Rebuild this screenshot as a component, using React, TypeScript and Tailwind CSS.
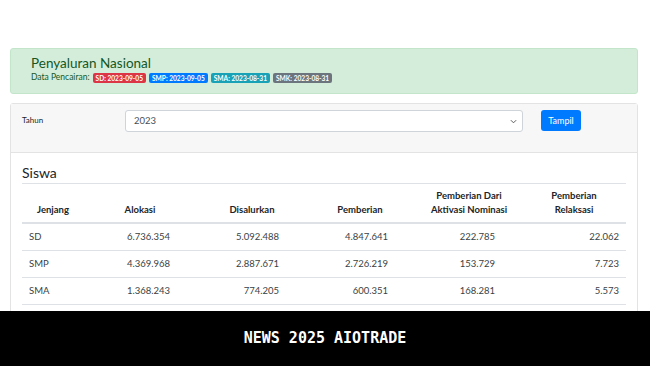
import React from "react";

const rows = [
  ["SD", "6.736.354", "5.092.488", "4.847.641", "222.785", "22.062"],
  ["SMP", "4.369.968", "2.887.671", "2.726.219", "153.729", "7.723"],
  ["SMA", "1.368.243", "774.205", "600.351", "168.281", "5.573"],
];

const cols = "grid-cols-[78px_78px_109px_109px_107px_123px]";

export default function App() {
  return (
    <div
      className="relative w-[650px] h-[366px] overflow-hidden bg-white"
      style={{ fontFamily: "Lato, 'Open Sans', sans-serif" }}
    >
      <div className="pt-[48px] pl-[10px]">
        {/* Alert */}
        <div className="w-[628px] h-[46px] rounded-[3px] bg-[#d4edda] border border-[#c3e6cb] pl-[20px] pt-[6px] text-[#155724]">
          <div className="text-[13.5px] leading-[17px]">Penyaluran Nasional</div>
          <div className="flex items-center gap-[3px] text-[8.5px] leading-[11px]">
            <span>Data Pencairan:</span>
            <span className="rounded-[2px] bg-[#dc3545] text-white font-bold text-[6.6px] leading-[10px] px-[3px]">SD: 2023-09-05</span>
            <span className="rounded-[2px] bg-[#007bff] text-white font-bold text-[6.6px] leading-[10px] px-[3px]">SMP: 2023-09-05</span>
            <span className="rounded-[2px] bg-[#17a2b8] text-white font-bold text-[6.6px] leading-[10px] px-[3px]">SMA: 2023-08-31</span>
            <span className="rounded-[2px] bg-[#6c757d] text-white font-bold text-[6.6px] leading-[10px] px-[3px]">SMK: 2023-08-31</span>
          </div>
        </div>

        {/* Card */}
        <div className="mt-[9px] w-[628px] border border-[#e3e3e3] rounded-[3px]">
          <div className="h-[49px] bg-[#f7f7f7] border-b border-[#e3e3e3] flex items-start pt-[6px] pl-[11px]">
            <div className="w-[103px] pt-[5px] text-[8px] leading-[10px] text-[#212529]">Tahun</div>
            <div className="w-[398px] h-[22px] bg-white border border-[#ced4da] rounded-[3px] flex items-center justify-between pl-[8px] pr-[5px] text-[9.5px] text-[#495057]">
              <span>2023</span>
              <svg width="7" height="5" viewBox="0 0 8 5" fill="none">
                <path d="M1 1l3 3 3-3" stroke="#555" strokeWidth="1.1" />
              </svg>
            </div>
            <div className="ml-[18px] w-[40px] h-[21px] bg-[#007bff] rounded-[3px] flex items-center justify-center text-white text-[9px]">
              Tampil
            </div>
          </div>
          <div className="pt-[11px] px-[11px] pb-[12px]">
            <div className="text-[14px] leading-[17px] text-[#212529] mb-[2px]">Siswa</div>
            <div className="border-t border-[#dee2e6] text-[9.5px] text-[#212529]">
              <div className={`grid ${cols} items-end font-bold border-b-2 border-[#dee2e6] leading-[14px]`}>
                <div className="pt-[5px] pb-[5px] pr-[16px] text-center">Jenjang</div>
                <div className="pt-[5px] pb-[5px] pl-[2px] text-center">Alokasi</div>
                <div className="pt-[5px] pb-[5px] pl-[39px] text-center">Disalurkan</div>
                <div className="pt-[5px] pb-[5px] pl-[37px] text-center">Pemberian</div>
                <div className="pt-[5px] pb-[5px] pl-[39px] flex flex-col items-center whitespace-nowrap">
                  <span>Pemberian Dari</span>
                  <span>Aktivasi Nominasi</span>
                </div>
                <div className="pt-[5px] pb-[5px] pl-[19px] flex flex-col items-center whitespace-nowrap">
                  <span>Pemberian</span>
                  <span>Relaksasi</span>
                </div>
              </div>
              {rows.map((r) => (
                <div key={r[0]} className={`grid ${cols} border-b border-[#dee2e6] leading-[14px] text-[#3a3f44]`}>
                  <div className="py-[6px] pl-[7px]">{r[0]}</div>
                  <div className="py-[6px] pr-[8px] text-right">{r[1]}</div>
                  <div className="py-[6px] pr-[8px] text-right">{r[2]}</div>
                  <div className="py-[6px] pr-[8px] text-right">{r[3]}</div>
                  <div className="py-[6px] pr-[8px] text-right">{r[4]}</div>
                  <div className="py-[6px] pr-[7px] text-right">{r[5]}</div>
                </div>
              ))}
            </div>
          </div>
        </div>
      </div>

      {/* Overlay banner */}
      <div className="absolute left-0 right-0 bottom-0 h-[55px] bg-black flex items-center justify-center">
        <span
          className="text-white text-[15px] font-bold"
          style={{ fontFamily: "'DejaVu Sans Mono', 'Liberation Mono', monospace" }}
        >
          NEWS 2025 AIOTRADE
        </span>
      </div>
    </div>
  );
}
